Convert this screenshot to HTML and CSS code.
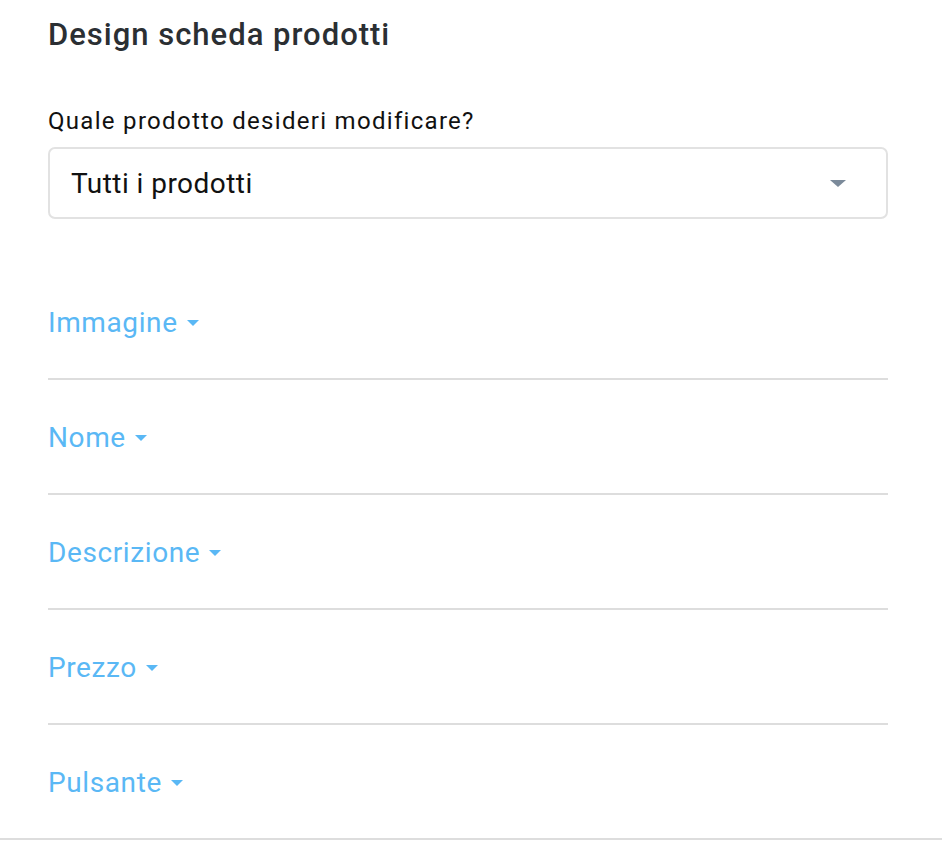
FILE: index.html
```html
<!DOCTYPE html>
<html lang="it">
<head>
<meta charset="utf-8">
<title>Design scheda prodotti</title>
<link rel="stylesheet" href="styles.css">
</head>
<body>
<div class="panel">
  <h2 class="title">Design scheda prodotti</h2>
  <label class="field-label">Quale prodotto desideri modificare?</label>
  <div class="select">
    <span class="select-value">Tutti i prodotti</span>
    <span class="select-caret"></span>
  </div>
</div>
<div class="sections">
  <div class="section"><span class="section-toggle">Immagine<span class="caret"></span></span></div>
  <div class="section"><span class="section-toggle">Nome<span class="caret"></span></span></div>
  <div class="section"><span class="section-toggle">Descrizione<span class="caret"></span></span></div>
  <div class="section"><span class="section-toggle">Prezzo<span class="caret"></span></span></div>
  <div class="section section-last"><span class="section-toggle">Pulsante<span class="caret"></span></span></div>
</div>
</body>
</html>
```
FILE: styles.css
```css
html, body {
  margin: 0;
  padding: 0;
  background: #ffffff;
  font-family: Roboto, "Liberation Sans", Arial, sans-serif;
}

.panel {
  margin: 0 54px 0 48px;
  display: flex;
  flex-direction: column;
}

.title {
  margin: 15px 0 0;
  font-size: 31px;
  line-height: 40px;
  font-weight: 500;
  letter-spacing: 1px;
  color: #2b2f33;
}

.field-label {
  margin-top: 52px;
  font-size: 24px;
  line-height: 28px;
  letter-spacing: 1.3px;
  color: #111111;
}

.select {
  margin-top: 12px;
  height: 72px;
  box-sizing: border-box;
  border: 2px solid #e2e2e2;
  border-radius: 7px;
  display: flex;
  align-items: center;
  justify-content: space-between;
  padding: 0 40px 0 21px;
}

.select-value {
  font-size: 28px;
  letter-spacing: 0.45px;
  color: #111111;
}

.select-caret {
  width: 0;
  height: 0;
  border-left: 8px solid transparent;
  border-right: 8px solid transparent;
  border-top: 7px solid #7b8a9a;
}

.sections {
  margin-top: 46px;
}

.section {
  margin: 0 54px 0 48px;
  padding: 43px 0 40px;
  border-bottom: 2px solid #dddddd;
}

.section-last {
  margin: 0;
  padding-left: 48px;
}

.section-toggle {
  display: inline-flex;
  align-items: center;
  font-size: 28px;
  line-height: 30px;
  letter-spacing: 0.6px;
  color: #5ab8f5;
}

.caret {
  margin-left: 9px;
  width: 0;
  height: 0;
  border-left: 6px solid transparent;
  border-right: 6px solid transparent;
  border-top: 6px solid #5ab8f5;
}
```
